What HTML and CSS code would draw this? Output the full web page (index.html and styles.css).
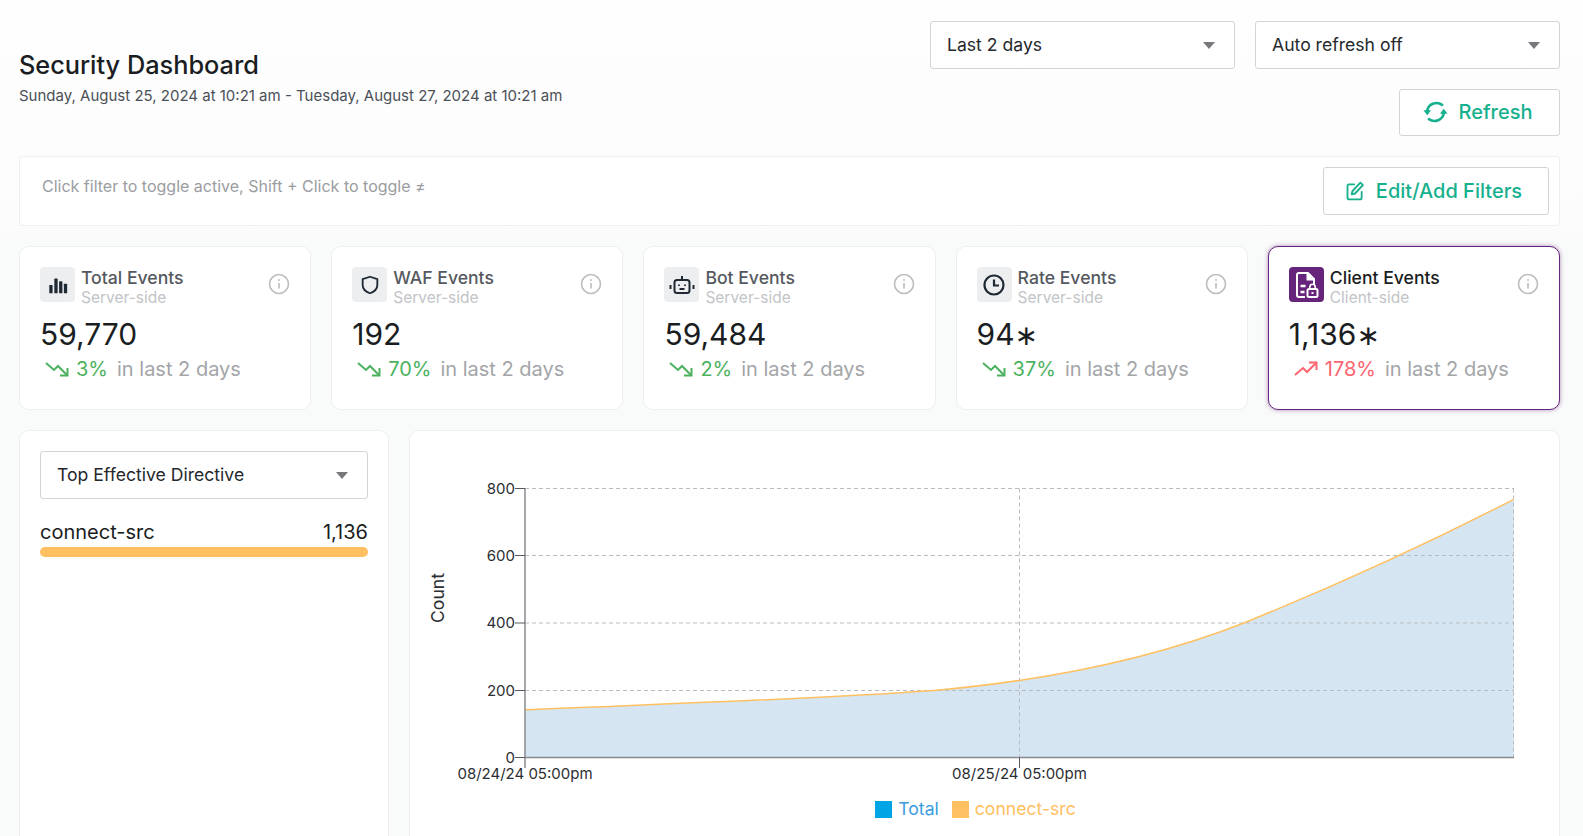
FILE: index.html
```html
<!DOCTYPE html>
<html lang="en">
<head>
  <meta charset="UTF-8" />
  <title>Security Dashboard</title>
  <link rel="stylesheet" href="styles.css">
</head>
<body>
  <header class="top">
    <div class="heading">
      <h1>Security Dashboard</h1>
      <p>Sunday, August 25, 2024 at 10:21 am - Tuesday, August 27, 2024 at 10:21 am</p>
    </div>
    <div class="controls">
      <div class="selects">
        <div class="select"><span>Last 2 days</span><i class="caret"></i></div>
        <div class="select"><span>Auto refresh off</span><i class="caret"></i></div>
      </div>
      <button class="btn btn-refresh">
        <svg width="27" height="22" viewBox="0 0 24 20" fill="none" stroke="currentColor" stroke-width="2.400" stroke-linecap="round"><path d="M18 3.500A8.500 8 0 0 0 4.500 9"/><path d="M1 8.500H8L4.500 13Z" fill="currentColor" stroke="none"/><path d="M6 16.500A8.500 8 0 0 0 19.500 11"/><path d="M16 11.500H23L19.500 7Z" fill="currentColor" stroke="none"/></svg>
        Refresh
      </button>
    </div>
  </header>

  <section class="filters">
    <span class="hint">Click filter to toggle active, Shift + Click to toggle ≠</span>
    <button class="btn btn-edit">
      <svg width="20" height="20" viewBox="0 0 24 24" fill="none" stroke="currentColor" stroke-width="2.200" stroke-linecap="round" stroke-linejoin="round"><path d="M11 4H5a2 2 0 0 0-2 2v14a2 2 0 0 0 2 2h13a2 2 0 0 0 2-2v-7"/><path d="M18.500 2l3 3L12 15l-4 1 1-4z"/></svg>
      Edit/Add Filters
    </button>
  </section>

  <section class="cards">
    <article class="card">
      <div class="card-head">
        <div class="card-icon">
          <svg width="22" height="22" viewBox="0 0 24 24" fill="#1f2933"><rect x="2.500" y="12" width="3.600" height="9" rx=".6"/><rect x="8" y="5" width="3.600" height="16" rx=".6"/><rect x="13.200" y="8" width="3.600" height="13" rx=".6"/><rect x="18.400" y="10.500" width="3.600" height="10.500" rx=".6"/></svg>
        </div>
        <div class="card-title"><strong>Total Events</strong><span>Server-side</span></div>
        <svg class="info" width="22" height="22" viewBox="0 0 22 22" fill="none"><circle cx="11" cy="11" r="9.500" stroke="currentColor" stroke-width="1.700"/><path d="M11 10v5.500" stroke="currentColor" stroke-width="1.700"/><circle cx="11" cy="7" r="1" fill="currentColor"/></svg>
      </div>
      <div class="card-value">59,770</div>
      <div class="card-trend down">
        <svg width="24" height="16" viewBox="0 0 24 16" fill="none" stroke="currentColor" stroke-width="2"><path d="M1 2l8 7 4-4 9 9"/><path d="M22.500 7v7.500H15"/></svg>
        <b>3%</b><span>in last 2 days</span>
      </div>
    </article>

    <article class="card">
      <div class="card-head">
        <div class="card-icon">
          <svg width="22" height="22" viewBox="0 0 24 24" fill="none" stroke="#1f2933" stroke-width="2" stroke-linejoin="round"><path d="M12 3l8 2.500v6.500c0 4.500-3.500 7.500-8 9-4.500-1.500-8-4.500-8-9V5.500z"/></svg>
        </div>
        <div class="card-title"><strong>WAF Events</strong><span>Server-side</span></div>
        <svg class="info" width="22" height="22" viewBox="0 0 22 22" fill="none"><circle cx="11" cy="11" r="9.500" stroke="currentColor" stroke-width="1.700"/><path d="M11 10v5.500" stroke="currentColor" stroke-width="1.700"/><circle cx="11" cy="7" r="1" fill="currentColor"/></svg>
      </div>
      <div class="card-value">192</div>
      <div class="card-trend down">
        <svg width="24" height="16" viewBox="0 0 24 16" fill="none" stroke="currentColor" stroke-width="2"><path d="M1 2l8 7 4-4 9 9"/><path d="M22.500 7v7.500H15"/></svg>
        <b>70%</b><span>in last 2 days</span>
      </div>
    </article>

    <article class="card">
      <div class="card-head">
        <div class="card-icon">
          <svg width="26" height="26" viewBox="0 0 26 26" fill="none" stroke="#1f2933" stroke-width="2"><rect x="5.500" y="8" width="15" height="13" rx="2.500"/><path d="M13 4v4M1.500 13v4M24.500 13v4"/><path d="M10 12.500v1.500M16 12.500v1.500M10.500 17h5" stroke-width="1.800"/></svg>
        </div>
        <div class="card-title"><strong>Bot Events</strong><span>Server-side</span></div>
        <svg class="info" width="22" height="22" viewBox="0 0 22 22" fill="none"><circle cx="11" cy="11" r="9.500" stroke="currentColor" stroke-width="1.700"/><path d="M11 10v5.500" stroke="currentColor" stroke-width="1.700"/><circle cx="11" cy="7" r="1" fill="currentColor"/></svg>
      </div>
      <div class="card-value">59,484</div>
      <div class="card-trend down">
        <svg width="24" height="16" viewBox="0 0 24 16" fill="none" stroke="currentColor" stroke-width="2"><path d="M1 2l8 7 4-4 9 9"/><path d="M22.500 7v7.500H15"/></svg>
        <b>2%</b><span>in last 2 days</span>
      </div>
    </article>

    <article class="card">
      <div class="card-head">
        <div class="card-icon">
          <svg width="24" height="24" viewBox="0 0 24 24" fill="none" stroke="#1f2933" stroke-width="2.200"><circle cx="12" cy="12" r="9.500"/><path d="M12 6.500V12.500H17"/></svg>
        </div>
        <div class="card-title"><strong>Rate Events</strong><span>Server-side</span></div>
        <svg class="info" width="22" height="22" viewBox="0 0 22 22" fill="none"><circle cx="11" cy="11" r="9.500" stroke="currentColor" stroke-width="1.700"/><path d="M11 10v5.500" stroke="currentColor" stroke-width="1.700"/><circle cx="11" cy="7" r="1" fill="currentColor"/></svg>
      </div>
      <div class="card-value">94<span class="star">∗</span></div>
      <div class="card-trend down">
        <svg width="24" height="16" viewBox="0 0 24 16" fill="none" stroke="currentColor" stroke-width="2"><path d="M1 2l8 7 4-4 9 9"/><path d="M22.500 7v7.500H15"/></svg>
        <b>37%</b><span>in last 2 days</span>
      </div>
    </article>

    <article class="card active">
      <div class="card-head">
        <div class="card-icon">
          <svg width="28" height="28" viewBox="0 0 28 28" fill="none" stroke="#fff" stroke-width="2"><path d="M13 26H7a2 2 0 0 1-2-2V4a2 2 0 0 1 2-2h9l6 6v6"/><path d="M15.500 2.500V8.500H22" fill="#fff"/><path d="M8.500 15h5M8.500 21h4" stroke-width="2.600"/><rect x="15.500" y="18" width="10" height="8" rx="1.500"/><path d="M17.800 18v-2a2.700 2.700 0 0 1 5.400 0v2" stroke-width="1.600"/><path d="M20.500 21v2"/></svg>
        </div>
        <div class="card-title"><strong>Client Events</strong><span>Client-side</span></div>
        <svg class="info" width="22" height="22" viewBox="0 0 22 22" fill="none"><circle cx="11" cy="11" r="9.500" stroke="currentColor" stroke-width="1.700"/><path d="M11 10v5.500" stroke="currentColor" stroke-width="1.700"/><circle cx="11" cy="7" r="1" fill="currentColor"/></svg>
      </div>
      <div class="card-value">1,136<span class="star">∗</span></div>
      <div class="card-trend up">
        <svg width="24" height="16" viewBox="0 0 24 16" fill="none" stroke="currentColor" stroke-width="2"><path d="M1 14l8-7 4 4 9-9"/><path d="M22.500 9V1.500H15"/></svg>
        <b>178%</b><span>in last 2 days</span>
      </div>
    </article>
  </section>

  <section class="bottom">
    <aside class="panel side">
      <div class="select"><span>Top Effective Directive</span><i class="caret"></i></div>
      <div class="row"><span>connect-src</span><span>1,136</span></div>
      <div class="bar"></div>
    </aside>
    <div class="panel chart">
      <svg class="plot" width="1149" height="410" viewBox="0 0 1149 410">
        <path class="area" d="M115 278.700C250 273 400 268.500 524 259.500C630 250 740 229 834.500 191.700C925 155 1015 114 1103.800 68.300V326.500H115Z"/>
        <g class="grid">
          <path d="M115 57.500H1104M115 124.500H1104M115 192H1104M115 259.500H1104"/>
          <path d="M609.500 57.500V326.500M1103.500 57.500V326.500"/>
        </g>
        <path class="curve" d="M115 278.700C250 273 400 268.500 524 259.500C630 250 740 229 834.500 191.700C925 155 1015 114 1103.800 68.300"/>
        <path class="axis" d="M115 57.500V337M115 326.500H1104"/>
        <path class="tick" d="M105 57.500H115M105 124.500H115M105 192H115M105 259.500H115M105 326.500H115M609.500 326.500V337"/>
        <g class="labels">
          <text x="105" y="62.500" text-anchor="end">800</text>
          <text x="105" y="129.500" text-anchor="end">600</text>
          <text x="105" y="197" text-anchor="end">400</text>
          <text x="105" y="264.500" text-anchor="end">200</text>
          <text x="105" y="331.500" text-anchor="end">0</text>
          <text x="115" y="348" text-anchor="middle">08/24/24 05:00pm</text>
          <text x="609.500" y="348" text-anchor="middle">08/25/24 05:00pm</text>
          <text class="count" transform="translate(34 167) rotate(-90)" text-anchor="middle">Count</text>
        </g>
      </svg>
      <div class="legend">
        <span class="swatch total"></span><span class="total-label">Total</span>
        <span class="swatch src"></span><span class="src-label">connect-src</span>
      </div>
    </div>
  </section>
</body>
</html>
```
FILE: styles.css
```css
html, body {
  margin: 0;
  height: 836px;
  overflow: hidden;
}
body {
  box-sizing: border-box;
  padding: 21px 23px 0 19px;
  background: linear-gradient(#fefefe 0, #fcfcfc 225px, #f9fafa 245px);
  font-family: Inter, "Liberation Sans", sans-serif;
  color: #1a1d21;
}
.top {
  display: flex;
  justify-content: space-between;
  height: 135px;
}
.heading {
  padding-top: 28px;
}
.heading h1 {
  margin: 0;
  font-size: 25.300px;
  line-height: 31px;
  font-weight: 500;
}
.heading p {
  margin: 7px 0 0;
  font-size: 15px;
  line-height: 18px;
  color: #4b5057;
}
.controls {
  display: flex;
  flex-direction: column;
  align-items: flex-end;
  gap: 20px;
}
.selects {
  display: flex;
  gap: 20px;
}
.select {
  box-sizing: border-box;
  display: flex;
  align-items: center;
  justify-content: space-between;
  width: 305px;
  height: 48px;
  padding: 0 19px 2px 16px;
  background: #fff;
  border: 1px solid #d3d4d6;
  border-radius: 3px;
  font-size: 17.600px;
  color: #25282c;
}
.caret {
  width: 0;
  height: 0;
  margin-top: 2px;
  border-left: 6px solid transparent;
  border-right: 6px solid transparent;
  border-top: 7px solid #77797c;
}
.btn {
  box-sizing: border-box;
  display: flex;
  align-items: center;
  justify-content: center;
  background: #fff;
  border: 1px solid #d3d4d6;
  border-radius: 3px;
  font-family: inherit;
  font-size: 20px;
  font-weight: 500;
  color: #16b08d;
}
.btn-refresh {
  width: 161px;
  height: 47px;
  gap: 10px;
  padding: 0 5px 2px 0;
}
.filters {
  box-sizing: border-box;
  display: flex;
  justify-content: space-between;
  height: 70px;
  padding: 10px 10px 0 22px;
  background: #fff;
  border: 1px solid #eeeff0;
  border-radius: 3px;
}
.hint {
  padding-top: 9px;
  font-size: 16px;
  line-height: 20px;
  color: #9a9da1;
}
.btn-edit {
  width: 226px;
  height: 48px;
  gap: 11px;
  padding: 0 5px 0 0;
}
.cards {
  display: grid;
  grid-template-columns: repeat(5, 1fr);
  gap: 20px;
  margin-top: 20px;
}
.card {
  box-sizing: border-box;
  height: 164px;
  padding: 20px;
  background: #fff;
  border: 1px solid #eeeff0;
  border-radius: 10px;
}
.card.active {
  border: 1.500px solid #66247a;
  box-shadow: 0 0 4px rgba(102, 36, 122, .5);
}
.card-head {
  display: flex;
  align-items: flex-start;
  gap: 6px;
}
.card-icon {
  display: flex;
  align-items: center;
  justify-content: center;
  width: 35px;
  height: 35px;
  flex: none;
  background: #eceef0;
  border-radius: 4px;
}
.active .card-icon {
  background: #66247a;
}
.card-title {
  display: flex;
  flex-direction: column;
  flex: 1;
}
.card-title strong {
  font-size: 17.600px;
  line-height: 21px;
  font-weight: 500;
  color: #55595f;
}
.active .card-title strong {
  color: #1a1d21;
}
.card-title span {
  margin-top: 1px;
  font-size: 15.500px;
  line-height: 18px;
  color: #c2c4c7;
}
.info {
  margin: 6px 0 0;
  color: #bdbfc1;
}
.card-value {
  margin-top: 9px;
  font-size: 30px;
  line-height: 36px;
  color: #1a1d21;
}
.star {
  font-family: "DejaVu Sans", sans-serif;
  font-size: 28px;
  line-height: 0;
}
.card-trend {
  display: flex;
  align-items: center;
  margin-top: 3px;
  padding-left: 5px;
  font-size: 20px;
  line-height: 28px;
  color: #a3a5a8;
}
.card-trend svg {
  margin-right: 7px;
}
.card-trend b {
  margin-right: 9px;
  font-weight: 400;
}
.card-trend.down svg, .card-trend.down b {
  color: #4cb25f;
}
.card-trend.up svg, .card-trend.up b {
  color: #fb6470;
}
.bottom {
  display: grid;
  grid-template-columns: 370px 1fr;
  gap: 20px;
  margin-top: 20px;
}
.panel {
  box-sizing: border-box;
  height: 420px;
  background: #fff;
  border: 1px solid #eeeff0;
  border-radius: 10px;
}
.side {
  padding: 20px;
}
.side .select {
  width: 100%;
}
.row {
  display: flex;
  justify-content: space-between;
  margin-top: 20px;
  font-size: 20px;
  line-height: 27px;
}
.bar {
  height: 10px;
  margin-top: 1px;
  background: #ffc061;
  border-radius: 5px;
}
.plot {
  display: block;
}
.grid path {
  fill: none;
  stroke: #b9bcbf;
  stroke-dasharray: 4 3;
}
.area {
  fill: #d6e5f2;
}
.curve {
  fill: none;
  stroke: #ffc061;
  stroke-width: 1.500;
}
.axis {
  fill: none;
  stroke: #898b8e;
  stroke-width: 1.500;
}
.tick {
  fill: none;
  stroke: #55585c;
}
.labels text {
  font-size: 15px;
  fill: #2b2e32;
}
.labels .count {
  font-size: 17.600px;
}
.legend {
  display: flex;
  align-items: center;
  justify-content: center;
  margin-top: -43px;
  padding-right: 18px;
  font-size: 17.600px;
  line-height: 22px;
}
.swatch {
  width: 17px;
  height: 17px;
  margin-right: 6px;
}
.swatch.total {
  background: #00a5e6;
}
.swatch.src {
  margin-left: 13px;
  background: #ffc061;
}
.total-label {
  color: #3a9be0;
}
.src-label {
  color: #ffc061;
}
```
